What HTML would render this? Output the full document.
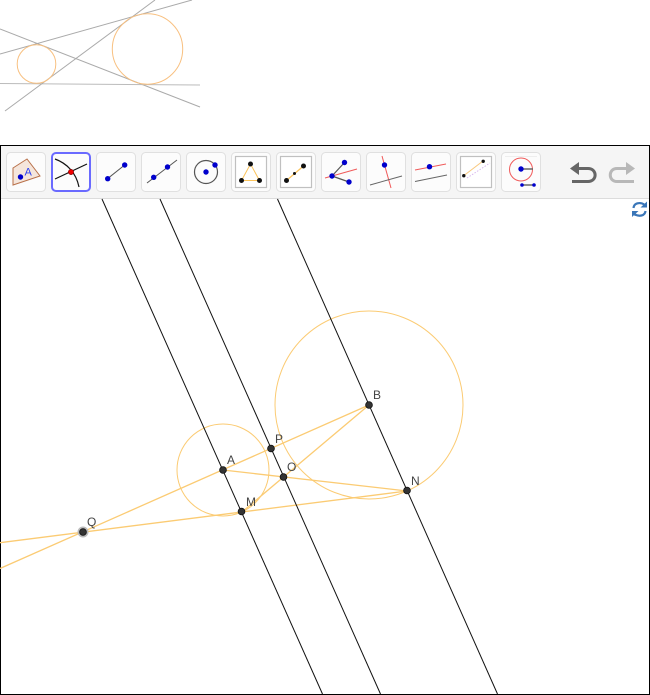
<!DOCTYPE html>
<html><head><meta charset="utf-8"><style>
html,body{margin:0;padding:0;background:#fff;width:650px;height:695px;overflow:hidden}
svg{display:block}
text{font-family:"Liberation Sans",sans-serif;font-size:12px;fill:#444}
</style></head><body>
<svg width="650" height="695" viewBox="0 0 650 695" xmlns="http://www.w3.org/2000/svg">
<!-- thumbnail -->
<g fill="none" stroke-width="1">
<g stroke="#aaa"><line x1="0" y1="54" x2="192" y2="0"/><line x1="0" y1="29" x2="200" y2="107"/><line x1="0" y1="83.5" x2="200" y2="85" stroke="#bbb"/><line x1="5" y1="111" x2="155" y2="0"/></g>
<circle cx="36.5" cy="64" r="19.3" stroke="#f8c080"/><circle cx="147.5" cy="49" r="35.2" stroke="#f8c080"/>
</g>
<!-- frame -->
<rect x="0.5" y="145.5" width="649" height="549" fill="#fff" stroke="#000"/>
<rect x="1" y="146" width="648" height="52" fill="#f5f5f5"/>
<line x1="1" y1="198.5" x2="649" y2="198.5" stroke="#dcdcdc"/>
<!-- buttons -->
<g fill="#fcfcfc" stroke="#e0e0e0" stroke-width="1">
<rect x="6.5" y="152.5" width="39" height="39" rx="4"/>
<rect x="52" y="153" width="38" height="38" rx="4" stroke="#6a6aff" stroke-width="2"/>
<rect x="96.5" y="152.5" width="39" height="39" rx="4"/>
<rect x="141.5" y="152.5" width="39" height="39" rx="4"/>
<rect x="186.5" y="152.5" width="39" height="39" rx="4"/>
<rect x="231.5" y="152.5" width="39" height="39" rx="4"/>
<rect x="276.5" y="152.5" width="39" height="39" rx="4"/>
<rect x="321.5" y="152.5" width="39" height="39" rx="4"/>
<rect x="366.5" y="152.5" width="39" height="39" rx="4"/>
<rect x="411.5" y="152.5" width="39" height="39" rx="4"/>
<rect x="456.5" y="152.5" width="39" height="39" rx="4"/>
<rect x="501.5" y="152.5" width="39" height="39" rx="4"/>
</g>
<!-- icon 1 polygon -->
<polygon points="13,168 27,159 40,176 13,185" fill="#f5e6dc" stroke="#b9714a"/>
<circle cx="20.5" cy="177" r="2.7" fill="#00c"/>
<text x="24.500" y="175.500" style="font-size:11px;fill:#2a3ff0">A</text>
<!-- icon 2 intersect -->
<path d="M55 159C66 163 76 172 79 187" fill="none" stroke="#111" stroke-width="1.2"/>
<line x1="55" y1="179" x2="87" y2="164" stroke="#111" stroke-width="1.2"/>
<circle cx="71" cy="172" r="2.7" fill="#e00" stroke="#600" stroke-width=".5"/>
<!-- icon 3 segment -->
<line x1="107.500" y1="178.700" x2="124.700" y2="165" stroke="#555"/>
<circle cx="107.700" cy="178.700" r="2.700" fill="#00c"/><circle cx="124.700" cy="165" r="2.700" fill="#00c"/>
<!-- icon 4 line -->
<line x1="147" y1="183" x2="177" y2="160" stroke="#555"/>
<circle cx="153.700" cy="177.300" r="2.700" fill="#00c"/><circle cx="167.500" cy="167" r="2.700" fill="#00c"/>
<!-- icon 5 circle -->
<circle cx="206" cy="172" r="11.500" fill="none" stroke="#555" stroke-width="1.200"/>
<circle cx="206" cy="172" r="2.700" fill="#00c"/><circle cx="215" cy="165" r="2.700" fill="#00c"/>
<!-- icon 6 triangle -->
<rect x="235.500" y="156.500" width="31" height="31" fill="#fff" stroke="#c0c0c0" stroke-width="1.200"/>
<polygon points="250.500,164 241.500,180.500 259.500,180.500" fill="none" stroke="#fbc35a"/>
<circle cx="250.500" cy="164" r="2.500" fill="#111"/><circle cx="241.500" cy="180.500" r="2.500" fill="#111"/><circle cx="259.500" cy="180.500" r="2.500" fill="#111"/>
<!-- icon 7 midpoint -->
<rect x="280.500" y="156.500" width="31" height="31" fill="#fff" stroke="#c0c0c0" stroke-width="1.200"/>
<line x1="286.500" y1="180.500" x2="303.500" y2="166" stroke="#fbc35a" stroke-width="1.200"/>
<circle cx="286.500" cy="180.500" r="2.500" fill="#111"/><circle cx="303.500" cy="166" r="2.500" fill="#111"/><circle cx="294.500" cy="173.500" r="1.500" fill="#111"/>
<!-- icon 8 angle bisector -->
<line x1="325" y1="178" x2="357" y2="169" stroke="#f05a5a"/>
<line x1="332" y1="176" x2="344.500" y2="162.500" stroke="#555" stroke-width="1.200"/>
<line x1="332" y1="176" x2="349" y2="182" stroke="#555" stroke-width="1.200"/>
<circle cx="332" cy="176" r="2.700" fill="#00c"/><circle cx="344.500" cy="162.500" r="2.700" fill="#00c"/><circle cx="349" cy="182" r="2.700" fill="#00c"/>
<!-- icon 9 perpendicular -->
<line x1="382" y1="156" x2="391" y2="188" stroke="#f05a5a"/>
<line x1="370" y1="185" x2="402" y2="176" stroke="#666"/>
<circle cx="384.500" cy="165" r="2.700" fill="#00c"/>
<!-- icon 10 parallel -->
<line x1="415" y1="170" x2="446" y2="164" stroke="#f05a5a"/>
<line x1="415" y1="181.500" x2="447" y2="175" stroke="#666"/>
<circle cx="429.500" cy="166.700" r="2.700" fill="#00c"/>
<!-- icon 11 reflect -->
<rect x="460.500" y="156.500" width="31" height="31" fill="#fff" stroke="#c0c0c0" stroke-width="1.200"/>
<line x1="464" y1="175.500" x2="483" y2="161" stroke="#f9c77c"/>
<line x1="467" y1="178" x2="490" y2="163" stroke="#d9b8ee" stroke-dasharray="1.500 1.500"/>
<circle cx="463.800" cy="175.700" r="1.700" fill="#111"/><circle cx="483.200" cy="161.300" r="1.700" fill="#111"/>
<!-- icon 12 slider -->
<line x1="505" y1="156.500" x2="537" y2="156.500" stroke="#eee"/>
<circle cx="521" cy="169.500" r="11.500" fill="none" stroke="#f05a5a" stroke-width="1"/>
<line x1="521" y1="169" x2="533" y2="169" stroke="#666" stroke-width="1.500"/>
<circle cx="521" cy="169" r="2.700" fill="#00c"/>
<line x1="522" y1="185" x2="534" y2="185" stroke="#444" stroke-width="1.200"/>
<circle cx="522" cy="185" r="1.800" fill="#00c"/><circle cx="534" cy="185" r="1.800" fill="#00c"/>
<!-- undo/redo -->
<path d="M577 168.500H588C597.500 168.500 597.500 181.500 588 181.500H572" fill="none" stroke="#666" stroke-width="3"/>
<polygon points="570,168.500 579,162 579,175" fill="#666"/>
<path d="M627 168.500H617C608 168.500 608 181.500 617 181.500H634" fill="none" stroke="#b8b8b8" stroke-width="3"/>
<polygon points="635,168.500 626,162 626,175" fill="#b8b8b8"/>
<!-- refresh icon -->
<g fill="none" stroke="#3a76b8" stroke-width="2.200">
<path d="M633.500 208C634 203 640 201.500 645 205"/>
<path d="M645.500 211C645 216 639 217 634 214"/>
</g>
<polygon points="640.500,207.500 647,207.500 647,201.500" fill="#3a76b8"/>
<polygon points="632,211 638.500,211 632,217" fill="#3a76b8"/>
<!-- geometry -->
<g fill="none" stroke="#fbcb73" stroke-width="1">
<circle cx="223" cy="470" r="46"/><circle cx="369" cy="405" r="94"/>
<line x1="0" y1="568.500" x2="369" y2="405" stroke-width="1.300"/>
<line x1="0" y1="542.700" x2="407" y2="491" stroke-width="1.300"/>
<line x1="223" y1="470" x2="407" y2="491" stroke-width="1.300"/>
<line x1="242" y1="512" x2="369" y2="405" stroke-width="1.300"/>
</g>
<g stroke="#111" stroke-width="1">
<line x1="102" y1="199" x2="322.500" y2="694"/>
<line x1="160" y1="199" x2="380.500" y2="694"/>
<line x1="277.500" y1="199" x2="497.500" y2="694"/>
</g>
<circle cx="83" cy="532" r="5.500" fill="#bbb"/>
<g fill="#333" stroke="#111" stroke-width=".8">
<circle cx="223" cy="470" r="3.400"/><circle cx="369" cy="405" r="3.400"/><circle cx="271" cy="448.500" r="3.400"/><circle cx="283.500" cy="477" r="3.400"/><circle cx="241.500" cy="511.500" r="3.400"/><circle cx="407" cy="490.500" r="3.400"/><circle cx="83" cy="532" r="3.400"/>
</g>
<text x="227" y="464">A</text><text x="373" y="399">B</text><text x="275" y="443">P</text><text x="287" y="471">O</text><text x="246" y="506">M</text><text x="411" y="485">N</text><text x="87" y="526">Q</text>
</svg>
</body></html>
